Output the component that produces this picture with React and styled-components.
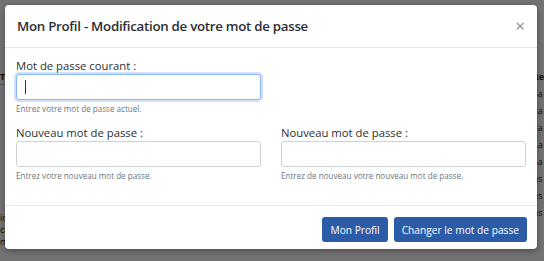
import React from 'react';
import styled, { createGlobalStyle } from 'styled-components';

const Global = createGlobalStyle`
  html, body { margin: 0; padding: 0; }
  body {
    width: 544px;
    height: 261px;
    overflow: hidden;
    background: #fff;
    font-family: "Open Sans", "Noto Sans", sans-serif;
  }
  * { box-sizing: border-box; }
`;

var Page = styled.div`
  position: relative;
  width: 544px;
  height: 261px;
  display: flex;
  justify-content: space-between;
  font-size: 9px;
  color: #212529;
`;

var Column = styled.div`
  display: flex;
  flex-direction: column;
  padding-top: ${p => p.top}px;
`;

var BehindCell = styled.div`
  height: ${p => p.h || 17}px;
  line-height: ${p => p.h || 17}px;
  font-weight: ${p => (p.bold ? 700 : 400)};
  border-bottom: ${p => (p.line ? '1px solid #c8c8c8' : 'none')};
  white-space: nowrap;
  overflow: hidden;
`;

var Backdrop = styled.div`
  position: absolute;
  inset: 0;
  background: rgba(0, 0, 0, 0.55);
`;

var Modal = styled.div`
  position: absolute;
  left: 5px;
  top: 5px;
  width: 532px;
  height: 244px;
  background: #fff;
  border-radius: 4px;
  box-shadow: 0 2px 6px rgba(0, 0, 0, 0.35);
  display: flex;
  flex-direction: column;
`;

var Header = styled.div`
  height: 43px;
  display: flex;
  align-items: center;
  justify-content: space-between;
  padding: 0 12px 0 12px;
  border-bottom: 1px solid #e4e6e8;
`;

var Title = styled.h5`
  margin: 0;
  font-size: 13.3px;
  font-weight: 600;
  letter-spacing: -0.28px;
  color: #2b2f33;
`;

var Close = styled.span`
  font-size: 17px;
  color: #8a8a8a;
  line-height: 1;
  margin-top: -2px;
`;

var Body = styled.div`
  flex: 1;
  padding: 11px 11px 0 11px;
  display: flex;
  flex-direction: column;
`;

var Row = styled.div`
  display: grid;
  grid-template-columns: 1fr 1fr;
  column-gap: 20px;
  margin-bottom: ${p => p.mb || 0}px;
`;

var Field = styled.div`
  display: flex;
  flex-direction: column;
`;

var Label = styled.label`
  font-size: 11.3px;
  color: #2b2f33;
  line-height: 14px;
  margin-bottom: 1px;
`;

var InputWrap = styled.div`
  position: relative;
`;

var Input = styled.input`
  width: 100%;
  height: 26px;
  border: 1px solid ${p => (p.$focused ? '#86b7f0' : '#cdd2d7')};
  border-radius: 3px;
  box-shadow: ${p => (p.$focused ? '0 0 0 2px rgba(120, 170, 235, 0.35)' : 'none')};
  outline: none;
  padding: 0 8px;
  font-family: inherit;
  font-size: 11px;
  background: #fff;
`;

var Caret = styled.span`
  position: absolute;
  left: 9px;
  top: 6px;
  width: 1px;
  height: 14px;
  background: #333;
`;

var Help = styled.small`
  font-size: 8.1px;
  color: #6c757d;
  line-height: 11px;
  margin-top: 3px;
`;

var Footer = styled.div`
  height: 44px;
  border-top: 1px solid #e4e6e8;
  display: flex;
  justify-content: flex-end;
  align-items: flex-start;
  gap: 6px;
  padding: 11px 10px 0 0;
`;

var Button = styled.button`
  height: 25px;
  padding: 0 ${p => p.px}px;
  border: none;
  border-radius: 3px;
  background: #2c5ca8;
  color: #fff;
  font-family: inherit;
  font-size: 10.2px;
  cursor: pointer;
`;

export default function App() {
  return (
    <Page>
      <Global />
      <Column top={68}>
        <BehindCell line bold>Tit</BehindCell>
        <BehindCell h={127}> </BehindCell>
        <BehindCell h={12}>io</BehindCell>
        <BehindCell h={12}>cc</BehindCell>
        <BehindCell h={12}>m</BehindCell>
      </Column>
      <Column top={68}>
        <BehindCell bold>Re</BehindCell>
        <BehindCell>Sa</BehindCell>
        <BehindCell>Sa</BehindCell>
        <BehindCell>Sa</BehindCell>
        <BehindCell>Sa</BehindCell>
        <BehindCell>Sa</BehindCell>
        <BehindCell>us</BehindCell>
        <BehindCell>us</BehindCell>
        <BehindCell>us</BehindCell>
      </Column>
      <Backdrop />
      <Modal>
        <Header>
          <Title>Mon Profil - Modification de votre mot de passe</Title>
          <Close>×</Close>
        </Header>
        <Body>
          <Row mb={12}>
            <Field>
              <Label>Mot de passe courant :</Label>
              <InputWrap>
                <Input type="password" $focused />
                <Caret />
              </InputWrap>
              <Help>Entrez votre mot de passe actuel.</Help>
            </Field>
          </Row>
          <Row>
            <Field>
              <Label>Nouveau mot de passe :</Label>
              <Input type="password" />
              <Help>Entrez votre nouveau mot de passe.</Help>
            </Field>
            <Field>
              <Label>Nouveau mot de passe :</Label>
              <Input type="password" />
              <Help>Entrez de nouveau votre nouveau mot de passe.</Help>
            </Field>
          </Row>
        </Body>
        <Footer>
          <Button px={8}>Mon Profil</Button>
          <Button px={8}>Changer le mot de passe</Button>
        </Footer>
      </Modal>
    </Page>
  );
}
